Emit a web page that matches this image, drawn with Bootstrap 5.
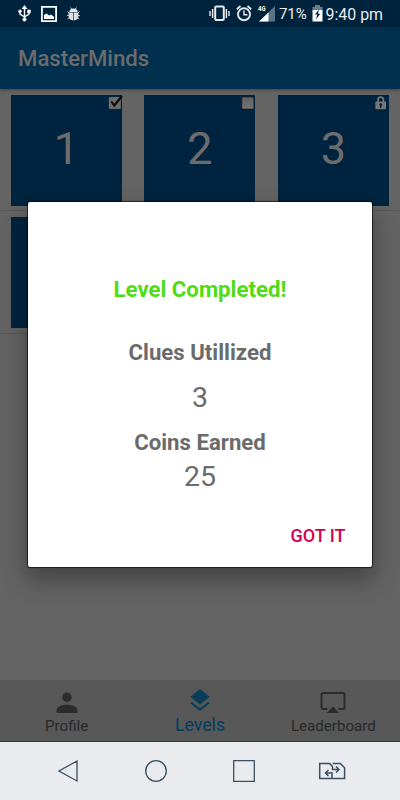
<!DOCTYPE html>
<html lang="en">
<head>
<meta charset="utf-8">
<meta name="viewport" content="width=device-width, initial-scale=1">
<title>MasterMinds</title>
<link href="https://cdn.jsdelivr.net/npm/bootstrap@5.3.0/dist/css/bootstrap.min.css" rel="stylesheet">
<style>
body{font-family:Roboto,"Liberation Sans",sans-serif;background:#646464;width:400px;height:800px;overflow:hidden;line-height:1}
svg{display:block;flex:none}
.statusbar{height:27px;background:#00233d;color:#e8ecef;font-size:15.9px;padding:0 17px 0 18px}
.image-icon,.bug-icon{margin-left:10px}
.alarm-icon{margin-left:6px}
.signal-icon{margin-left:6px}
.percent{font-size:15px;margin:2px 0 0 3px;letter-spacing:-.1px}
.battery-icon{margin-left:5px}
.clock{margin:2px 0 0 3px;white-space:nowrap}
.appbar{height:62px;background:#00304d;color:#6c6c6c;font-size:22.200px;font-weight:500;padding:1px 18px 0;box-shadow:0 1px 3px rgba(0,0,0,.35)}
.levels{display:grid;grid-template-columns:repeat(3,133.4px);height:591px;grid-auto-rows:122.3px;align-content:start}
.level{border-bottom:1px solid #585858;border-radius:3px;padding:5.600px 11px 5px}
.tile{width:111px;height:111px;background:#00243f;color:#6c6c6c;font-size:45px;padding-bottom:4px}
.mark-icon{position:absolute;top:-1px;right:-1px}
.tabs{height:62px;background:#585858;border-bottom:1px solid #3a3a3a;color:#292929;font-size:15.100px}
.tabs a{color:inherit;width:133.33px}
.tabs a.current{color:#003e66;font-size:17.700px}
.sysnav{height:58px;background:#e9ebef;color:#3b5060}
.dialog{position:absolute;left:28px;top:202px;width:344px;height:365px;background:#fff;border-radius:2px;color:#6b6b6b;box-shadow:0 0 1px 1px rgba(0,0,0,.65),0 12px 24px 2px rgba(0,0,0,.32);padding-top:75px}
.dialog h1,.dialog h2{font-size:22.200px;font-weight:700;line-height:24px;margin:0}
.dialog h1{color:#50dc14;margin-bottom:39px}
.amount{font-size:28.5px;line-height:34px}
.first-amount{margin:17px 0 15px}
.last-amount{margin-top:6px}
.confirm{color:#d5004f;font-size:18px;font-weight:500;line-height:20px;margin:32px 26.500px 0 0;padding:0;border:0;background:none}
</style>
</head>
<body class="position-relative d-flex flex-column">
<div class="statusbar d-flex align-items-center">
  <svg width="13" height="17" viewBox="0 0 13 17" fill="none" stroke="#fff" stroke-width="1.4"><path d="M6.500 3v11M2 6v3.200l4.500 2.800M11 6v3.200l-4.500 2.800"/><path d="M6.500 0l2.900 4H3.600z" fill="#fff" stroke="none"/><circle cx="6.500" cy="14.500" r="2" fill="#fff" stroke="none"/><circle cx="2" cy="6.300" r="1.700" fill="#fff" stroke="none"/><path d="M9.300 4.700h3.400v3.400H9.300z" fill="#fff" stroke="none"/></svg>
  <svg class="image-icon" width="16" height="16" viewBox="0 0 16 16"><path d="M.9.900h14.200v14.200H.9z" fill="none" stroke="#fff" stroke-width="1.800"/><path d="M3 13V9l2.500-1.500 2.500 2 1.800-1 1.500 1 1.700 1.200V13z" fill="#fff"/></svg>
  <svg class="bug-icon" width="13" height="14" viewBox="0 0 13 14"><path d="M2.300 5C2.300 2.600 4 1.400 6.500 1.400s4.200 1.200 4.200 3.600z" fill="#e2e5e8"/><path d="M1.600 5.400h4.600v8C3.200 13.100 1.600 11.700 1.600 9.500zM6.800 5.400h4.600v4.100c0 2.200-1.600 3.600-4.600 3.900z" fill="#dde1e4"/><path d="M3.500.5l1.300 1.700M9.500.5L8.200 2.200M2.500 6.500L.6 4.500M10.500 6.500l1.900-2M2.500 8.500H.2M10.500 8.500h2.300M2.500 10.500L.7 12M10.500 10.500l1.800 1.500" stroke="#ccd2d6" stroke-width="1"/></svg>
  <svg class="ms-auto" width="21" height="17" viewBox="0 0 21 17" fill="none" stroke="#e5e7e9"><rect x="6.200" y="1.500" width="8.600" height="13.500" rx="1" stroke-width="2"/><path d="M3.600 4v9M17.400 4v9" stroke-width="1.500"/><path d="M1 6v5M20 6v5" stroke-width="1.400"/></svg>
  <svg class="alarm-icon" width="16" height="17" viewBox="0 0 16 17" fill="none" stroke="#e5e7e9"><circle cx="8" cy="9.300" r="6" stroke-width="1.900"/><path d="M8 5.500v4.200h3.500" stroke-width="1.500"/><path d="M.8 4.200L4.500 1M15.200 4.200L11.500 1" stroke-width="1.800"/></svg>
  <svg class="signal-icon" width="18" height="17" viewBox="0 0 18 17"><path d="M17 1v15.500H1z" fill="#5b7386"/><path d="M10.500 7.500v9H1z" fill="#fff"/><text x="0" y="6.300" font-size="6.500" font-weight="700" fill="#fff" textLength="7.500" lengthAdjust="spacingAndGlyphs">4G</text></svg>
  <span class="percent">71%</span>
  <svg class="battery-icon" width="11" height="17" viewBox="0 0 11 17"><path d="M3 0h5v2h2.500v4H.5V2H3z" fill="#667c8d"/><path d="M.5 5h10v11.500H.5z" fill="#fff"/><path d="M6.800 4.500L3 9.500h2.200L4 14.500l4.200-5.800H6z" fill="#00233d"/></svg>
  <span class="clock">9:40 pm</span>
</div>
<header class="appbar d-flex align-items-center">MasterMinds</header>
<main class="levels">
  <div class="level"><div class="tile position-relative d-flex align-items-center justify-content-center">1
    <svg class="mark-icon" width="15" height="17" viewBox="0 0 15 17"><rect x=".8" y="3" width="12" height="12" rx="1.500" fill="#6c6c6c"/><path d="M3.300 7.500L6.300 11.500 14 2" fill="none" stroke="#080808" stroke-width="2"/></svg></div></div>
  <div class="level"><div class="tile position-relative d-flex align-items-center justify-content-center">2
    <svg class="mark-icon" width="15" height="17" viewBox="0 0 15 17"><defs><linearGradient id="g" x2="0" y2="1"><stop stop-color="#606060"/><stop offset="1" stop-color="#747474"/></linearGradient></defs><rect x=".8" y="3" width="12" height="12" rx="1.500" fill="url(#g)" stroke="#111" stroke-width=".5"/></svg></div></div>
  <div class="level"><div class="tile position-relative d-flex align-items-center justify-content-center">3
    <svg class="mark-icon" width="15" height="17" viewBox="0 0 15 17"><path d="M3 8.500V5.800a2.700 2.700 0 0 1 5.400 0v2.700" fill="none" stroke="#777" stroke-width="1.700"/><rect x=".4" y="7.500" width="10.600" height="7.800" rx=".8" fill="#777"/><path d="M5.700 9.200a1.500 1.500 0 0 1 .7 2.800v2H5v-2a1.500 1.500 0 0 1 .7-2.800z" fill="#00243f"/></svg></div></div>
  <div class="level"><div class="tile d-flex align-items-center justify-content-center">4</div></div>
</main>
<nav class="tabs d-flex">
  <a class="d-flex flex-column align-items-center text-decoration-none" href="#"><svg style="margin-top:11.500px" width="22" height="22" viewBox="0 0 22 22" fill="#2c2c2c"><circle cx="11" cy="5.200" r="4.700"/><path d="M.5 21v-3c0-3.400 6-5.300 10.500-5.300s10.500 1.900 10.500 5.300v3z"/></svg><span style="margin-top:5.500px">Profile</span></a>
  <a class="current d-flex flex-column align-items-center text-decoration-none" href="#"><svg style="margin-top:9px" width="20" height="22" viewBox="0 0 20 22" fill="#0b3e5b"><path d="M10 0l9.700 7.700L10 15.400.3 7.700z"/><path d="M10 19.200l8.100-6.400 1.700 1.400L10 22 .2 14.200l1.700-1.400z"/></svg><span style="margin-top:5.500px">Levels</span></a>
  <a class="d-flex flex-column align-items-center text-decoration-none" href="#"><svg style="margin-top:11.500px" width="26" height="22" viewBox="0 0 26 22"><path d="M7.500 17H3a1.500 1.500 0 0 1-1.500-1.500v-13A1.500 1.500 0 0 1 3 1h20a1.500 1.500 0 0 1 1.500 1.500v13A1.500 1.500 0 0 1 23 17h-4.500" fill="none" stroke="#2c2c2c" stroke-width="2"/><path d="M13 14.500l6.200 6.500H6.800z" fill="#2c2c2c"/></svg><span style="margin-top:5.500px">Leaderboard</span></a>
</nav>
<nav class="sysnav">
  <svg width="400" height="58" viewBox="0 742 400 58" fill="none" stroke="currentColor" stroke-width="1.300"><path d="M77 761v20l-18-10z"/><circle cx="156" cy="771" r="10.300"/><path d="M233.700 760.700h20.600v20.600h-20.600z"/><path d="M332 776v2.500h-12.300v-15h10l3 3.500M332.700 763.500h7.600l4.300 4.200v10.800H332v-6.500M329.500 763.500l3 3v3h6.500M336 766.500l3 3-3 3M332 773h-6.500M328.500 770l-3 3 3 3" stroke-width="1.500"/></svg>
</nav>
<section class="dialog d-flex flex-column align-items-center" role="dialog">
  <h1>Level Completed!</h1>
  <h2>Clues Utillized</h2>
  <div class="amount first-amount">3</div>
  <h2>Coins Earned</h2>
  <div class="amount last-amount">25</div>
  <button class="confirm align-self-end" type="button">GOT IT</button>
</section>
<script src="https://cdn.jsdelivr.net/npm/bootstrap@5.3.0/dist/js/bootstrap.bundle.min.js"></script>
</body>
</html>
